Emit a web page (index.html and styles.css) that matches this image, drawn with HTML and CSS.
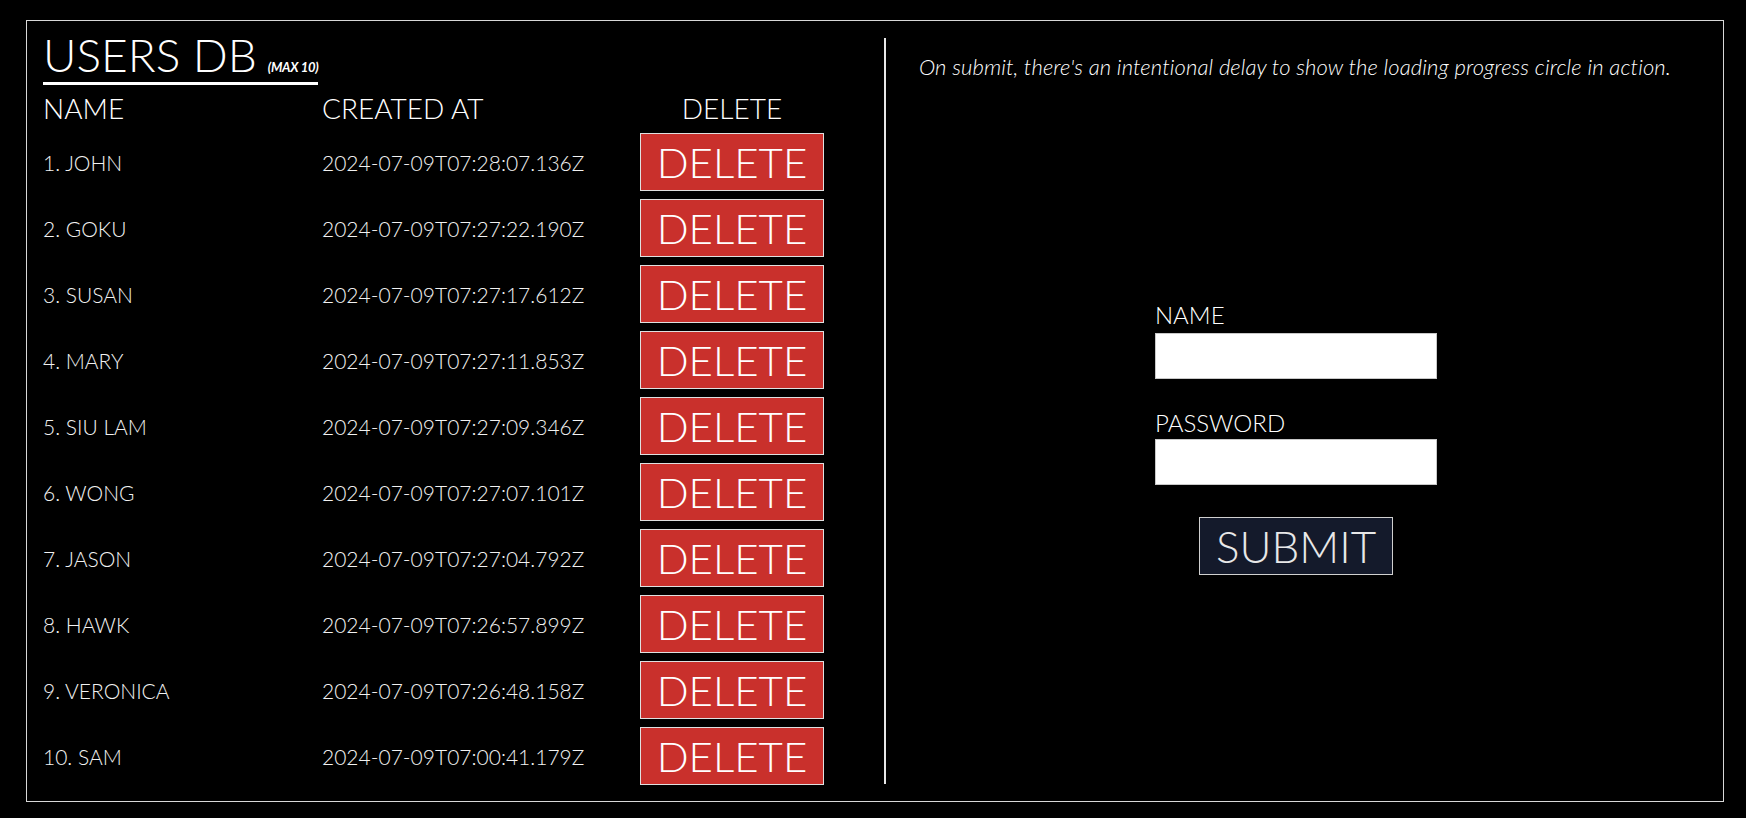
FILE: index.html
```html
<!DOCTYPE html>
<html lang="en">
<head>
<meta charset="utf-8">
<title>Users DB</title>
<link rel="stylesheet" href="styles.css">
</head>
<body>
<div class="frame">
  <section class="users">
    <h1 class="title">USERS DB<span class="max">(MAX 10)</span></h1>
    <div class="grid head">
      <div>NAME</div>
      <div>CREATED AT</div>
      <div class="center">DELETE</div>
    </div>
    <div class="rows">
      <div class="grid row"><div>1. JOHN</div><div>2024-07-09T07:28:07.136Z</div><button class="del">DELETE</button></div>
      <div class="grid row"><div>2. GOKU</div><div>2024-07-09T07:27:22.190Z</div><button class="del">DELETE</button></div>
      <div class="grid row"><div>3. SUSAN</div><div>2024-07-09T07:27:17.612Z</div><button class="del">DELETE</button></div>
      <div class="grid row"><div>4. MARY</div><div>2024-07-09T07:27:11.853Z</div><button class="del">DELETE</button></div>
      <div class="grid row"><div>5. SIU LAM</div><div>2024-07-09T07:27:09.346Z</div><button class="del">DELETE</button></div>
      <div class="grid row"><div>6. WONG</div><div>2024-07-09T07:27:07.101Z</div><button class="del">DELETE</button></div>
      <div class="grid row"><div>7. JASON</div><div>2024-07-09T07:27:04.792Z</div><button class="del">DELETE</button></div>
      <div class="grid row"><div>8. HAWK</div><div>2024-07-09T07:26:57.899Z</div><button class="del">DELETE</button></div>
      <div class="grid row"><div>9. VERONICA</div><div>2024-07-09T07:26:48.158Z</div><button class="del">DELETE</button></div>
      <div class="grid row"><div>10. SAM</div><div>2024-07-09T07:00:41.179Z</div><button class="del">DELETE</button></div>
    </div>
  </section>
  <section class="side">
    <p class="note">On submit, there's an intentional delay to show the loading progress circle in action.</p>
    <form class="form">
      <label class="label" for="name">NAME</label>
      <input class="input" id="name" type="text">
      <label class="label second" for="pw">PASSWORD</label>
      <input class="input" id="pw" type="password">
      <button class="submit" type="button">SUBMIT</button>
    </form>
  </section>
</div>
</body>
</html>
```

FILE: styles.css
```css
html, body {
  background: #000;
}
body {
  margin: 0;
  padding: 20px 22px 0 26px;
  font-family: Lato, "Open Sans", sans-serif;
  color: #fff;
}
.frame {
  display: flex;
  height: 782px;
  box-sizing: border-box;
  border: 1px solid #d8d8d8;
  padding: 17px 0;
}
.users {
  width: 857px;
  box-sizing: border-box;
  padding-left: 16px;
}
.title {
  display: inline-block;
  margin: 0;
  font-size: 46px;
  line-height: 34px;
  font-weight: 300;
  padding-bottom: 8px;
  border-bottom: 3px solid #fff;
}
.max {
  font-size: 13px;
  line-height: 13px;
  font-weight: 700;
  font-style: italic;
  margin-left: 11px;
  letter-spacing: -0.3px;
}
.grid {
  display: grid;
  grid-template-columns: 279px 318px 184px;
  align-items: center;
}
.head {
  margin-top: 9px;
  font-size: 28px;
  line-height: 28px;
  font-weight: 300;
}
.center {
  text-align: center;
}
.rows {
  margin-top: 11px;
  display: flex;
  flex-direction: column;
  gap: 8px;
}
.row {
  height: 58px;
  font-size: 21px;
  font-weight: 300;
  color: #f2f2f2;
}
.del {
  height: 58px;
  width: 184px;
  box-sizing: border-box;
  border: 1px solid #e0e0e0;
  background: #c9302c;
  color: #fff;
  font-family: Lato, "Open Sans", sans-serif;
  font-size: 42px;
  font-weight: 300;
  line-height: 56px;
  padding: 0;
}
.side {
  flex: 1;
  border-left: 2px solid #e8e8e8;
  padding: 0 50px 0 33px;
  display: flex;
  flex-direction: column;
  align-items: center;
}
.note {
  align-self: stretch;
  margin: 17px 0 0;
  font-size: 22px;
  line-height: 24px;
  letter-spacing: 0.12px;
  white-space: nowrap;
  font-style: italic;
  font-weight: 300;
  color: #fff;
}
.form {
  margin-top: 224px;
  width: 282px;
  display: flex;
  flex-direction: column;
}
.label {
  font-size: 24px;
  line-height: 24px;
  font-weight: 300;
  margin-bottom: 6px;
}
.label.second {
  margin-top: 32px;
  margin-bottom: 4px;
}
.input {
  height: 46px;
  box-sizing: border-box;
  border: 1px solid #c8c8c8;
  background: #fff;
  margin: 0;
}
.submit {
  align-self: center;
  margin-top: 32px;
  width: 194px;
  height: 58px;
  box-sizing: border-box;
  border: 1px solid #d0d0d0;
  background: #141a2b;
  color: #e8e8e8;
  font-family: Lato, "Open Sans", sans-serif;
  font-size: 44px;
  font-weight: 300;
  line-height: 56px;
  padding: 0;
}
```
